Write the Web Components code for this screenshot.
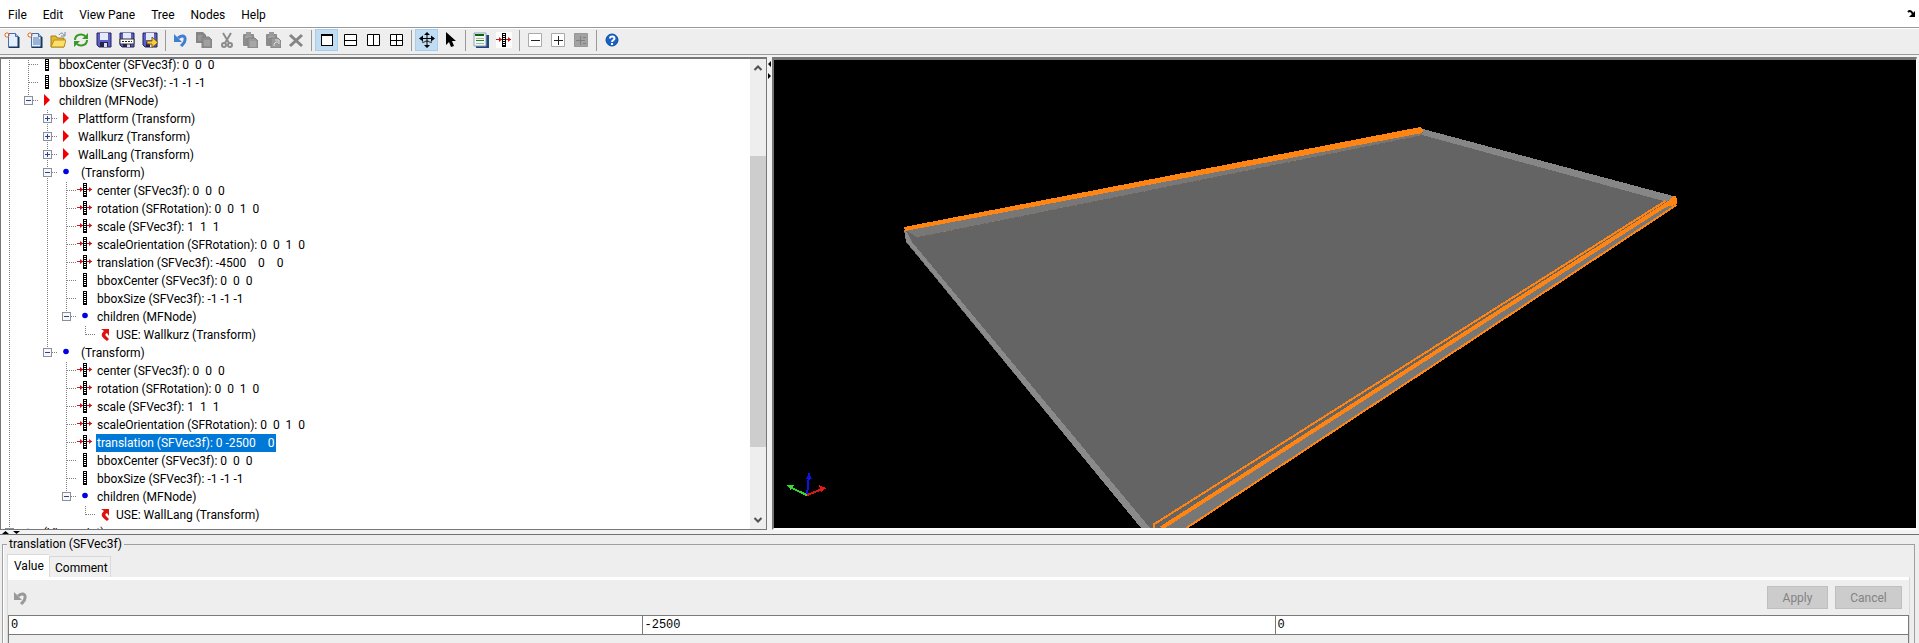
<!DOCTYPE html>
<html lang="en">
<head>
<meta charset="utf-8">
<title>Scene Editor</title>
<style>
html, body { margin: 0; height: 100%; }
body { background: #eee; color: #000; font: 12px/18px Roboto, "Open Sans", sans-serif; overflow: hidden; }
</style>
</head>
<body>
<scene-editor></scene-editor>
<script>
const define = (name, html, setup) => {
  const tpl = document.createElement('template');
  tpl.innerHTML = html;
  customElements.define(name, class extends HTMLElement {
    connectedCallback() {
      if (this.shadowRoot) return;
      this.attachShadow({ mode: 'open' }).append(tpl.content.cloneNode(true));
      if (setup) setup(this, this.shadowRoot);
    }
  });
};

const page = '<path d="M4.5 1.5h7l3 3v11h-10z" fill="#e3efff" stroke="#4a6fa5"/><path d="M14.5 5v10.5H5" fill="none" stroke="#17375e" stroke-width="2"/><path d="M11.5 1.5v3h3" fill="#a9c4ea" stroke="#4a6fa5"/>';
const spark = '<path d="M3 0v6M0 3h6M1 1l4 4M5 1L1 5" stroke="#e0703a"/><rect x="2" y="2" width="2" height="2" fill="#fff"/>';
const disk = '<path d="M1 1h14v14H3l-2-2z" fill="#5a5fc0" stroke="#23235f"/><rect x="4" y="1" width="8" height="7" fill="#e4e9fb"/><rect x="4" y="10" width="8" height="5" fill="#22224e"/><rect x="8" y="11" width="3" height="4" fill="#dde"/>';
const film = '<path d="M6 0h4v14H6z" fill="#000"/><path d="M7 1.5h2M7 3.5h2M7 5.5h2M7 7.5h2M7 9.5h2M7 11.5h2" stroke="#fff"/>';
const arrows = '<path d="M0 6.5h6M10 6.5h5" stroke="#c8171b"/><path d="M3 4l3 2.5-3 2.5zM12 4l3 2.5-3 2.5z" fill="#c8171b"/>';
const undo = c => `<path d="M5 6C8 3 13 3 12 8 12 11 10 12 8 14" fill="none" stroke="${c}" stroke-width="3"/><path d="M1 2v8h8z" fill="${c}"/>`;
const paste = '<rect x="1" y="2" width="11" height="12" rx="1" fill="#8c8c8c"/><rect x="4" y="0" width="5" height="4" fill="#9a9a9a"/><path d="M3 5h7" stroke="#bbb"/><path d="M6 6h7l3 3v7H6z" fill="#999" stroke="#828282"/>';
const ICONS = {
  'new': page + spark,
  'newtext': page + '<path d="M6 6h6M6 8h7M6 10h7M6 12h7" stroke="#5577a8"/>' + spark,
  open: '<path d="M1 4h5l1 2h7v9H1z" fill="#e3b934" stroke="#a97c12"/><path d="M1 15l3-7h12l-2 7z" fill="#fbe06a" stroke="#b98c1a"/><path d="M9 3c2-3 4-2 5 0M15 0v4h-4" fill="none" stroke="#6b83a8"/>',
  reload: '<path d="M2 8c0-6 8-7 11-3M14 8c0 6-8 7-11 3" fill="none" stroke="#3a9a28" stroke-width="2"/><path d="M15 1v6H9zM1 15V9h6z" fill="#3a9a28"/>',
  save: disk,
  print: disk + '<path d="M1 7h14v5H1z" fill="#fff" stroke="#333"/><path d="M3 9.5h10" stroke="#222" stroke-dasharray="2 1"/>',
  saveas: disk + '<path d="M5 9h5V5l6 5.5-6 5V12H5z" fill="#f7cf3d" stroke="#7d5c10"/>',
  undo: undo('#3f7fd0'),
  undogray: undo('#999'),
  copy: '<path d="M0 0h7l3 3v8H0z" fill="#858585"/><path d="M2 4h5M2 6h5M2 8h5" stroke="#aaa"/><path d="M6 5h7l3 3v8H6z" fill="#8f8f8f" stroke="#808080"/><path d="M8 9h6M8 11h6M8 13h6" stroke="#b0b0b0"/>',
  cut: '<path d="M4 1l6 10M12 1L6 11" stroke="#8c8c8c" stroke-width="2"/><circle cx="5" cy="13" r="2" fill="none" stroke="#8c8c8c" stroke-width="2"/><circle cx="11" cy="13" r="2" fill="none" stroke="#8c8c8c" stroke-width="2"/>',
  paste: paste + '<path d="M8 10h6M8 12h6M8 14h6" stroke="#b5b5b5"/>',
  pastelink: paste + '<path d="M9 14c0-3 1-4 4-4M10 8h4v4" fill="none" stroke="#ddd"/>',
  del: '<path d="M2 3l12 11M14 3L2 14" stroke="#858585" stroke-width="3"/>',
  one: '<rect x="2.5" y="2.5" width="11" height="11" fill="#fff" stroke="#000"/><path d="M2 3h12" stroke="#000" stroke-width="2"/>',
  rows: '<path d="M2.5 2.5h12v11h-12zM2 8.5h12" fill="#fff" stroke="#000"/>',
  cols: '<path d="M2.5 2.5h12v11h-12zM8.5 2v12" fill="#fff" stroke="#000"/>',
  quad: '<path d="M2.5 2.5h12v11h-12zM8.5 2v12M2 8.5h12" fill="#fff" stroke="#000"/>',
  move: '<path d="M2 6.5h12M8 3v10" stroke="#000"/><path d="M8 0l3 3H5zM8 16l3-3H5zM0 6.5l4-3v6zM16 6.5l-4-3v6z"/><path d="M3 10c2 1 3-1 5-1s3 2 5 1" fill="none" stroke="#000"/>',
  pointer: '<path d="M4 0v13l3-3 2 5 3-1-2-5h4z"/>',
  report: '<path d="M3 3h13v13H3z" fill="#26457a"/><path d="M1 1h12v13H1z" fill="#f2f7f2" stroke="#8aa4c0"/><path d="M2 2h9v2H2z" fill="#0c640c"/><path d="M3 6.5h8M3 11.5h8" stroke="#9fc09f"/><path d="M3 8.5h8" stroke="#2c7c2c"/>',
  filmbtn: '<rect width="16" height="16" fill="#fff"/><g transform="translate(0 1)">' + film + arrows + '</g>',
  minus: '<path d="M1.5 1.5h13v13h-13z" fill="#fff" stroke="#aaa"/><path d="M4 8.5h9" stroke="#222"/>',
  plus: '<path d="M1.5 1.5h13v13h-13z" fill="#fff" stroke="#aaa"/><path d="M4 8.5h9M8.5 4v9" stroke="#222"/>',
  plusgray: '<path d="M1.5 1.5h13v13h-13z" fill="#a2a2a2" stroke="#999"/><path d="M3 8.5h9M7.5 4v9M10 5.5h3M10 11.5h3" stroke="#808080"/>',
  help: '<circle cx="8" cy="8" r="6" fill="#1762c4" stroke="#0d4a9c"/><path d="M6 6.5c0-3 4.5-2.5 4.5 0C10.5 8 8 8 8 10M8 11v2" fill="none" stroke="#fff" stroke-width="2"/>',
  film, filmarrows: film + arrows,
  red: '<path d="M5 1l6 6-6 6z" fill="#f00000"/>',
  dot: '<circle cx="8" cy="6.5" r="2.8" fill="#0000e6"/>',
  use: '<path d="M5 2h8v7l-2-3c-2 1-2 2-1 3l3 3-2 2C4 9 5 7 8 4z" fill="#e01010"/>',
  overflow: '<path d="M7 6c2-2 3-1 5 2" fill="none" stroke="#000" stroke-width="2"/><path d="M14 5v6H8z"/>',
};
const icon = n => `<svg width="16" height="16" viewBox="0 0 16 16" aria-hidden="true">${ICONS[n]}</svg>`;

define('menu-bar', `
<style>
:host { display: flex; align-items: center; height: 27px; background: #fff; border-bottom: 1px solid #999; }
nav { flex: 1; display: flex; }
.more { border: 0; background: none; padding: 0 2px; }
svg { display: block; }
</style>
<nav aria-label="Main menu"><slot></slot></nav>
<button type="button" class="more" aria-label="More">${icon('overflow')}</button>`);

define('menu-item', `
<style>
:host { display: block; }
button { border: 0; background: none; color: inherit; font: inherit; padding: 3px 8px 0; height: 25px; white-space: nowrap; }
</style>
<button type="button"><slot></slot></button>`);

define('tool-button', `
<style>
:host { display: block; }
button { display: grid; place-items: center; box-sizing: border-box; width: 23px; height: 22px; padding: 0; border: 1px solid transparent; background: none; }
:host([selected]) button { background: #bfdcf3; border-color: #a4cdee; }
svg { display: block; }
</style>
<button type="button"></button>`, (el, root) => {
  const b = root.querySelector('button');
  b.innerHTML = icon(el.getAttribute('icon'));
  b.setAttribute('aria-label', el.getAttribute('label'));
  b.disabled = el.hasAttribute('disabled');
});

define('tool-bar', `
<style>
:host { display: flex; align-items: center; box-sizing: border-box; height: 27px; padding-bottom: 3px; background: #eee; border-top: 1px solid #fff; border-bottom: 1px solid #999; }
.sep { width: 1px; height: 21px; margin: 0 3px 0 4px; background: #999; }
</style>`, (el, root) => {
  const groups = [
    ['new', 'newtext', 'open', 'reload', 'save', 'print', 'saveas'],
    ['undo', 'copy/', 'cut/', 'paste/', 'pastelink/', 'del/'],
    ['one*', 'rows', 'cols', 'quad'], ['move*', 'pointer'], ['report', 'filmbtn'],
    ['minus', 'plus', 'plusgray/'], ['help']];
  root.querySelector('style').insertAdjacentHTML('afterend', groups.map(g => g.map(s => {
    const n = s.replace(/[/*]/, '');
    return `<tool-button icon="${n}" label="${n}"${s.endsWith('*') ? ' selected' : ''}${s.endsWith('/') ? ' disabled' : ''}></tool-button>`;
  }).join('')).join('<span class="sep"></span>'));
});

/* One line of the tree. Each letter in "guides" is a 19px column:
   . empty, | line, + line with branch, L last branch,
   o/c open or closed box with the line running on, e open box ending the line */
define('tree-row', `
<style>
:host { display: flex; height: 18px; white-space: pre; }
svg { display: block; flex: none; }
.icon { width: 19px; padding-top: 1px; flex: none; box-sizing: border-box; }
.label { padding: 0 1px; }
:host([selected]) .label { background: #0078d7; color: #fff; }
</style>
<span class="label"><slot></slot></span>`, (el, root) => {
  const dash = 'stroke="#808080" stroke-dasharray="1 1"';
  const cell = g => {
    const full = `<path d="M8.5 0v18" ${dash}/>`, top = `<path d="M8.5 0v9" ${dash}/>`, h = `<path d="M9 8.5h10" ${dash}/>`;
    const box = `<rect x="4.5" y="4.5" width="8" height="8" fill="#f6f8fb" stroke="#8a8f99"/><path d="M6 8.5h5" stroke="#33418a"/>`;
    return `<svg width="19" height="18" aria-hidden="true">${{
      '.': '', '|': full, '+': full + h, L: top + h, o: full + h + box, e: top + h + box,
      c: full + h + box + '<path d="M8.5 6v5" stroke="#33418a"/>' }[g]}</svg>`;
  };
  root.querySelector('.label').insertAdjacentHTML('beforebegin',
    [...el.getAttribute('guides')].map(cell).join('') + `<span class="icon">${icon(el.getAttribute('icon'))}</span>`);
});

define('tree-view', `
<style>
:host { display: flex; min-height: 0; min-width: 0; background: #fff; border: 1px solid #777; border-top: 2px solid #777; }
.rows { flex: 1; overflow: hidden; min-width: 0; }
.bar { width: 16px; background: #eee; display: flex; flex-direction: column; }
.bar svg { display: block; flex: none; }
.before { flex: 80; } .thumb { flex: 291; background: #cdcdcd; } .after { flex: 65; }
</style>
<div class="rows" role="tree" aria-label="Scene tree"></div>
<div class="bar" aria-hidden="true">
  <svg width="16" height="17"><path d="M4.5 11L8 7.5l3.5 3.5" fill="none" stroke="#505050" stroke-width="2"/></svg>
  <span class="before"></span><span class="thumb"></span><span class="after"></span>
  <svg width="16" height="17"><path d="M4.5 6L8 9.5 11.5 6" fill="none" stroke="#505050" stroke-width="2"/></svg>
</div>`, (el, root) => {
  const fields = translation => [
    ['filmarrows', 'center (SFVec3f): 0  0  0'],
    ['filmarrows', 'rotation (SFRotation): 0  0  1  0'],
    ['filmarrows', 'scale (SFVec3f): 1  1  1'],
    ['filmarrows', 'scaleOrientation (SFRotation): 0  0  1  0'],
    ['filmarrows', translation],
    ['film', 'bboxCenter (SFVec3f): 0  0  0'],
    ['film', 'bboxSize (SFVec3f): -1 -1 -1']];
  const transform = (last, translation, use) => {
    const stem = last ? '|..' : '|.|';
    return [
      ['|.' + (last ? 'e' : 'o'), 'dot', ' (Transform)'],
      ...fields(translation).map(([i, s]) => [stem + '+', i, s]),
      [stem + 'e', 'dot', 'children (MFNode)'],
      [stem + '.L', 'use', use]];
  };
  const rows = [
    ['|+', 'film', 'bboxCenter (SFVec3f): 0  0  0'],
    ['|+', 'film', 'bboxSize (SFVec3f): -1 -1 -1'],
    ['|e', 'red', 'children (MFNode)'],
    ['|.c', 'red', 'Plattform (Transform)'],
    ['|.c', 'red', 'Wallkurz (Transform)'],
    ['|.c', 'red', 'WallLang (Transform)'],
    ...transform(false, 'translation (SFVec3f): -4500    0    0', 'USE: Wallkurz (Transform)'),
    ...transform(true, 'translation (SFVec3f): 0 -2500    0', 'USE: WallLang (Transform)'),
    ['c', 'dot', ' (Viewpoint)']];
  const box = root.querySelector('.rows');
  for (const [g, i, s] of rows) {
    const r = document.createElement('tree-row');
    r.setAttribute('guides', g); r.setAttribute('icon', i); r.setAttribute('role', 'treeitem');
    if (s.includes('-2500')) r.setAttribute('selected', '');
    r.textContent = s;
    box.append(r);
  }
  box.scrollTop = 3;
});

define('scene-view', `
<style>
:host { display: block; min-width: 0; min-height: 0; background: #000; border: solid #fff; border-width: 3px 1px 2px 2px; border-top-color: #777; border-left-color: #777; margin-right: 2px; overflow: hidden; contain: size; }
svg { display: block; width: 100%; height: 100%; }
</style>
<svg viewBox="0 0 1142 468" preserveAspectRatio="xMinYMin slice" role="img" aria-label="3D scene" shape-rendering="crispEdges">
  <path d="M130 170L648 71 901 140 412 468H367L132 182z" fill="#646464"/>
  <path d="M130 170l3 1 10 6 505-102v-3z" fill="#777"/>
  <path d="M143 177L648 75" stroke="#b5763a" stroke-dasharray="1 6"/>
  <path d="M130 169l3 3 5 10 238 286h-9L132 181z" fill="#8a8a8a"/>
  <path d="M649 69l250 67-6 6L648 75z" fill="#868686"/>
  <path d="M130 167L646 67l3 3-1 3L131 171z" fill="#ff8412"/>
  <path d="M890 143l10-5 2 8-490 322h-31v-3z" fill="#777"/>
  <path d="M890 142l8-3-511 329h-7v-3z" fill="#646464"/>
  <path d="M380 468v-4L891 141" fill="none" stroke="#ff8412" stroke-width="2"/>
  <path d="M387 468L899 140" stroke="#ff8412" stroke-width="4"/>
  <path d="M412 468L902 145" stroke="#ff8412" stroke-width="2"/>
  <path d="M897 138l4-3 2 5-1 5-7 1-10 5z" fill="#ff8412"/>
  <path d="M33 435l2-20" stroke="#1010e8" stroke-width="2"/><path d="M35 412l3 7h-6z" fill="#1010e8"/>
  <path d="M33 435l-15-7" stroke="#30d830" stroke-width="2"/><path d="M13 425l7 0-3 5z" fill="#30e030"/>
  <path d="M33 435l15-6" stroke="#d81818" stroke-width="2"/><path d="M52 428l-7-3 2 7z" fill="#e81818"/>
</svg>`);

define('property-pane', `
<style>
:host { display: block; padding: 0 4px 0 2px; overflow: hidden; }
fieldset { margin: 0; padding: 1px 4px 0; border: 1px solid #a0a0a0; border-bottom: 0; min-width: 0; box-shadow: inset 1px 0 #fff; }
legend { padding: 0 2px; height: 18px; }
.tabs { display: flex; align-items: flex-end; height: 23px; }
.tabs button { box-sizing: border-box; border: 1px solid #d9d9d9; border-bottom: 0; background: #f0f0f0; font: inherit; color: inherit; padding: 2px 2px 0 5px; height: 21px; min-width: 62px; text-align: left; white-space: nowrap; }
.tabs button[aria-selected=true] { background: #fff; height: 23px; min-width: 42px; padding: 0 5px 0 6px; border-right: 0; }
.panel { border: 1px solid #d9d9d9; border-top: 0; box-shadow: inset 0 3px #fff; padding-top: 3px; }
.actions { display: flex; align-items: center; gap: 7px; height: 35px; padding: 0 7px 0 5px; }
.actions button { box-sizing: border-box; height: 23px; border: 1px solid #bfbfbf; background: #ccc; color: #838383; font: inherit; padding: 0; }
.actions .apply { margin-left: auto; width: 61px; } .actions .cancel { width: 67px; }
.actions .undo { border: 0; background: none; height: 16px; }
svg { display: block; }
.grid { height: 40px; border: 1px solid #7a7a7a; border-width: 1px 1px 0; }
table { width: 100%; border-collapse: collapse; table-layout: fixed; background: #fff; }
td { padding: 1px 2px 0; border-bottom: 1px solid #7a7a7a; font: 12px/17px "Liberation Mono", monospace; }
td + td { border-left: 1px solid #7a7a7a; }
</style>
<fieldset>
  <legend>translation (SFVec3f)</legend>
  <div class="tabs" role="tablist"><button type="button" role="tab" aria-selected="true">Value</button><button type="button" role="tab" aria-selected="false">Comment</button></div>
  <div class="panel" role="tabpanel">
    <div class="actions"><button type="button" class="undo" disabled aria-label="Undo">${icon('undogray')}</button><button type="button" class="apply" disabled>Apply</button><button type="button" class="cancel" disabled>Cancel</button></div>
    <div class="grid"><table aria-label="Value"><tbody><tr><td>0</td><td>-2500</td><td>0</td></tr></tbody></table></div>
  </div>
</fieldset>`);

define('scene-editor', `
<style>
:host { display: grid; grid-template-rows: auto auto minmax(0, 1fr) auto 108px; height: 100vh; }
.split { display: grid; grid-template-columns: calc(40% - 1px) 5px minmax(0, 1fr); padding-top: 2px; min-height: 0; background: #f3f3f3; }
.hbar { height: 4px; border-bottom: 1px solid #707070; background: #f3f3f3; }
svg { display: block; }
</style>
<menu-bar><menu-item>File</menu-item><menu-item>Edit</menu-item><menu-item>View Pane</menu-item><menu-item>Tree</menu-item><menu-item>Nodes</menu-item><menu-item>Help</menu-item></menu-bar>
<tool-bar></tool-bar>
<div class="split">
  <tree-view></tree-view>
  <div class="vbar"><svg width="5" height="24" aria-hidden="true"><path d="M4 4v6L1 7zM1 16v6l3-3z"/></svg></div>
  <scene-view></scene-view>
</div>
<div class="hbar"><svg width="24" height="4" aria-hidden="true"><path d="M2 4h7L5.5 1zM13 1h7l-3.5 3z"/></svg></div>
<property-pane></property-pane>`);
</script>
</body>
</html>
